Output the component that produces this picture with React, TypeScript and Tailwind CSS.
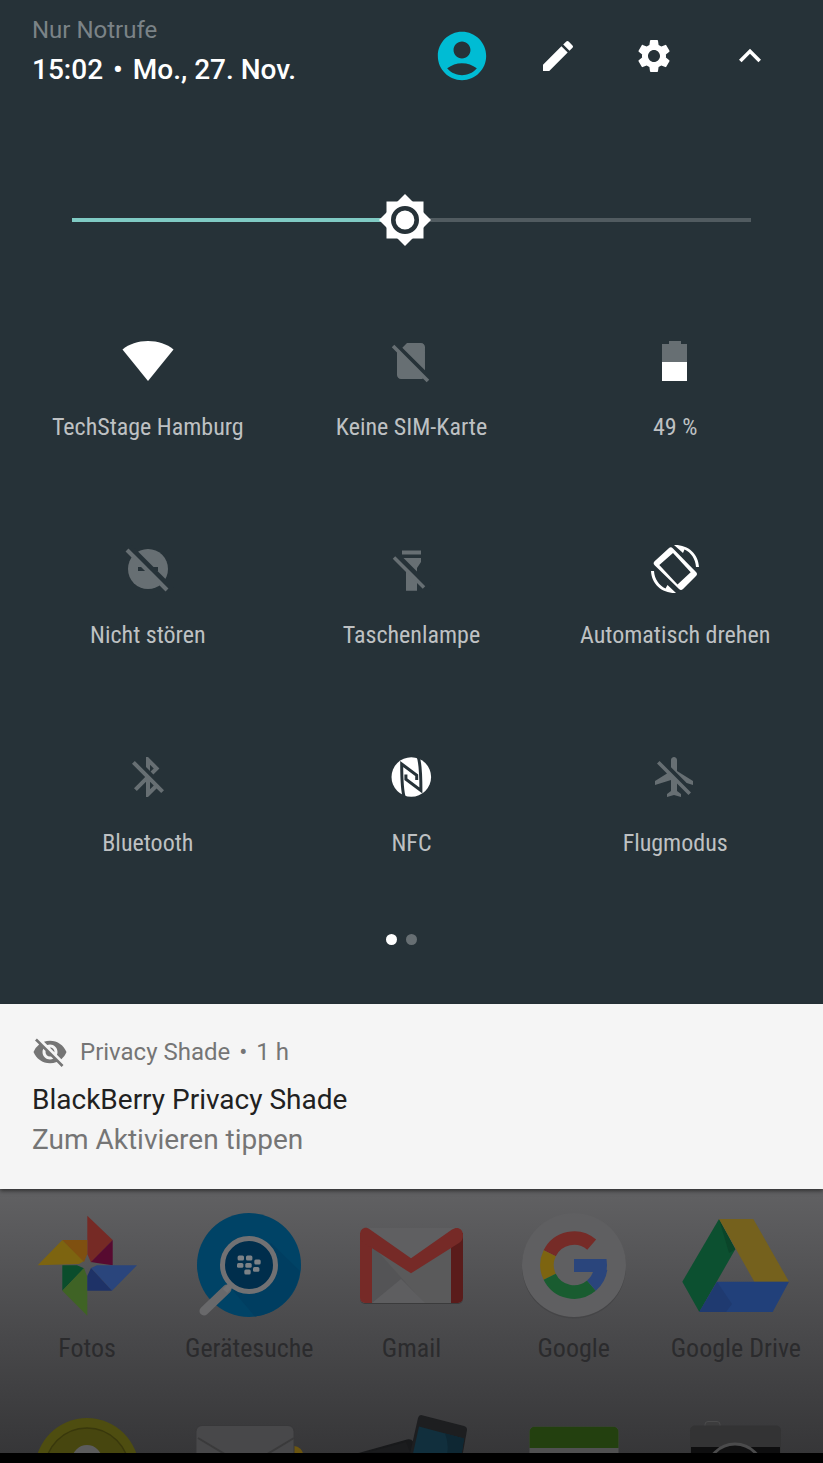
import { useState, type ReactNode } from 'react';
import {
  MdAccountCircle,
  MdEdit,
  MdExpandLess,
  MdSettings,
  MdVisibilityOff,
} from 'react-icons/md';

const condensed = "font-['Roboto_Condensed',Roboto,sans-serif]";

function WifiIcon() {
  return (
    <svg viewBox="0 0 56 56" className="size-14 fill-white">
      <path d="M28 48 2.500 16.500C9 11 18 8 28 8s19 3 25.500 8.500z" />
    </svg>
  );
}

// 24px material glyphs, padded so that they share the 56px tile box
function GlyphIcon({ d }: { d: string }) {
  return (
    <svg viewBox="-2 -2 28 28" className="size-14 fill-[#676f73]">
      <path d={d} />
    </svg>
  );
}

function BatteryIcon() {
  return (
    <svg viewBox="0 0 56 56" className="size-14">
      <path d="M22 8h12v3h6v18H15V11h7z" fill="#676f73" />
      <path d="M15 29h25v19H15z" fill="#fff" />
    </svg>
  );
}

function DoNotDisturbIcon() {
  return (
    <svg viewBox="0 0 56 56" className="size-14">
      <circle cx="28" cy="28" r="20" fill="#676f73" />
      <path d="M18 26h20v4H18z" fill="#263238" />
      <path d="M10 6 52 48" stroke="#263238" strokeWidth="5" />
      <path d="M7 9 47 49" stroke="#676f73" strokeWidth="4" />
    </svg>
  );
}

function FlashlightIcon() {
  return (
    <svg viewBox="0 0 56 56" className="size-14">
      <path d="M19 9.500h19v4H19zM19 17h19v4l-4 6v22.700H23V27l-4-6z" fill="#676f73" />
      <path d="M14 14 46 46" stroke="#263238" strokeWidth="5" />
      <path d="M10 20 23 33v-6l-4-5-6-6z" fill="#263238" />
      <path d="M11 16.500 41 46.500" stroke="#676f73" strokeWidth="3.500" />
    </svg>
  );
}

function RotateIcon() {
  return (
    <svg viewBox="0 0 56 56" className="size-14 fill-white">
      <path
        fillRule="evenodd"
        d="M21.800 7.300 7.600 20.300q-2 2 0 4L32 48q2 2 4 0l13-13q2-2 0-4L26 7.400q-2.200-2.200-4.200-.1zM26 12l17.700 19.300L30.500 43.500 12.300 24z"
      />
      <path d="M27 4C41 3.500 51.500 13 52 26h-3C48.500 18 44 11.500 37.500 8.600L36 12z" />
      <path d="M29 52C15 52.500 4.500 43 4 30h3c.5 8 5 14.500 11.500 17.400L20.500 44z" />
    </svg>
  );
}

function NfcIcon() {
  return (
    <svg viewBox="0 0 56 56" className="size-14">
      <circle cx="28.300" cy="28" r="19.800" fill="#fff" />
      <g fill="none" stroke="#263238" strokeWidth="3">
        <path d="M21.500 49C19 42 18.700 30 18.700 15L33.700 26.300V31" />
        <path d="M35.100 7.500c2.500 7 2.800 19 2.800 34L22.900 30.200V25.500" />
      </g>
    </svg>
  );
}

const tiles: { label: string; on: boolean; icon: ReactNode }[] = [
  { label: 'TechStage Hamburg', on: true, icon: <WifiIcon /> },
  {
    label: 'Keine SIM-Karte',
    on: false,
    icon: (
      <GlyphIcon d="M18.990 5c0-1.100-.89-2-1.990-2h-7L7.660 5.340 19 16.680 18.990 5zM3.650 3.880L2.380 5.150 5 7.770V19c0 1.100.9 2 2 2h10.010c.35 0 .67-.1.96-.26l1.880 1.880 1.270-1.270L3.650 3.880z" />
    ),
  },
  { label: '49 %', on: true, icon: <BatteryIcon /> },
  { label: 'Nicht stören', on: false, icon: <DoNotDisturbIcon /> },
  { label: 'Taschenlampe', on: false, icon: <FlashlightIcon /> },
  { label: 'Automatisch drehen', on: true, icon: <RotateIcon /> },
  {
    label: 'Bluetooth',
    on: false,
    icon: (
      <GlyphIcon d="M13 5.830l1.880 1.880-1.600 1.600 1.410 1.410 3.020-3.020L12 2h-1v5.030l2 2v-3.200zM5.410 4L4 5.410 10.590 12 5 17.590 6.410 19 11 14.410V22h1l4.290-4.290 2.300 2.290L20 18.590 5.410 4zM13 18.170v-3.760l1.880 1.880L13 18.170z" />
    ),
  },
  { label: 'NFC', on: true, icon: <NfcIcon /> },
  {
    label: 'Flugmodus',
    on: false,
    icon: (
      <GlyphIcon d="M13 9V3.500c0-.83-.67-1.500-1.500-1.500S10 2.670 10 3.500v3.680l7.830 7.830L21 16v-2l-8-5zM3 5.270l4.990 4.990L2 14v2l8-2.500V19l-2 1.500V22l3.500-1 3.500 1v-1.500L13 19v-3.730L18.730 21 20 19.730 4.270 4 3 5.270z" />
    ),
  },
];

function PhotosLogo() {
  return (
    <svg viewBox="0 0 112 112" className="size-28">
      <path d="M56.300 6.700 81.700 31 60 53.500 56.300 45z" fill="#762a25" />
      <path d="M81.700 31v25.300L66 54l-6-1z" fill="#570a30" />
      <path d="M6.700 56.300 31.300 31 53 52l-5 3z" fill="#7d6410" />
      <path d="M31.300 31h25v14L53 53z" fill="#7f5010" />
      <path d="M31.300 56.300H46l7 3-21.700 22.400z" fill="#0a4d2c" />
      <path d="m31.300 81.700 25 25V68L53 59z" fill="#3f6325" />
      <path d="M106 56.300 81 81.700 60 59l6-2.700z" fill="#2a457c" />
      <path d="M56.300 81.700H81L60 59l-3.700 8z" fill="#1e3267" />
    </svg>
  );
}

function DeviceSearchLogo() {
  const keys = [
    [47.8, 49], [56.2, 49], [47.2, 56.3], [55.5, 56.3], [64.5, 53], [63.2, 60.3], [54.5, 63],
  ];
  return (
    <svg viewBox="0 0 112 112" className="size-28">
      <circle cx="56" cy="56" r="52" fill="#004366" />
      <path d="M78 34 107 62A52 52 0 0 1 62 107.500L37 78z" fill="#003e61" />
      <path d="M34 80 11 102" stroke="#69696b" strokeWidth="9" strokeLinecap="round" />
      <path d="M38 76 32 82" stroke="#717173" strokeWidth="6" />
      <circle cx="56" cy="56" r="26.500" fill="#002e4c" stroke="#717173" strokeWidth="5" />
      {keys.map(([x, y]) => (
        <rect key={`${x}-${y}`} x={x - 3.2} y={y - 2.4} width="6.400" height="4.800" rx="1.500" fill="#7c8287" />
      ))}
    </svg>
  );
}

function GmailLogo() {
  return (
    <svg viewBox="0 0 112 112" className="size-28">
      <rect x="5" y="20" width="103" height="75" rx="5" fill="#3b3b3c" />
      <rect x="5" y="19" width="103" height="75" rx="5" fill="#5f5f61" />
      <path d="M17 36 56 64 96 36v58H17z" fill="#5a5a5b" />
      <path d="M17 36 69 94H17z" fill="#545456" />
      <path d="M17 94 46 70l24 24z" fill="#5e5e60" />
      <path d="M5 24h12v70h-7a5 5 0 0 1-5-5z" fill="#762a27" />
      <path d="M96 24h12v65a5 5 0 0 1-5 5h-7z" fill="#5a1c1b" />
      <path d="M5 26c0-7 6-9 10-5.500L56 49.300l41-28.800c5-3.500 11-1 11 5.500 0 4-1 6-4 8L56 64.300 9 34c-3-2-4-4-4-8z" fill="#762a27" />
    </svg>
  );
}

function GoogleLogo() {
  return (
    <svg viewBox="0 0 112 112" className="size-28">
      <circle cx="56" cy="57.500" r="52" fill="#454547" />
      <circle cx="56" cy="56" r="52" fill="#5f5f61" />
      <g fill="none" strokeWidth="13.500">
        <path d="M73.700 35.600A27 27 0 0 0 31.700 44.300" stroke="#762b27" />
        <path d="M31.700 44.300A27 27 0 0 0 31.700 67.800" stroke="#7d6410" />
        <path d="M31.700 67.800A27 27 0 0 0 73.400 76.700" stroke="#195c30" />
        <path d="M73.400 76.700A27 27 0 0 0 82.600 60" stroke="#2a457c" />
      </g>
      <path d="M56 50h32.500q1 6 0 13H56z" fill="#2a457c" />
    </svg>
  );
}

function DriveLogo() {
  return (
    <svg viewBox="0 0 112 112" className="size-28">
      <path d="M39 10 55.300 40.300 19.300 103 2.300 72.700z" fill="#0c5030" />
      <path d="M39 10 55.300 40.300 49 44z" fill="#0a4529" />
      <path d="M39 10h34.300L109 72.700H74.300z" fill="#75611d" />
      <path d="M37 72.700h72L92.700 103H19.300z" fill="#21407a" />
      <path d="M37 72.700 52 95l-6 8H19.300z" fill="#1f3a70" />
    </svg>
  );
}

function CoinLogo() {
  return (
    <svg viewBox="0 0 112 112" className="size-28">
      <circle cx="56" cy="56" r="52" fill="#4e4d10" />
      <circle cx="56" cy="56" r="42" fill="#47460f" stroke="#39380c" strokeWidth="1.500" />
      <circle cx="56" cy="46" r="11" fill="none" stroke="#5c5c5d" strokeWidth="8" />
    </svg>
  );
}

function MailLogo() {
  return (
    <svg viewBox="0 0 112 112" className="size-28">
      <circle cx="101" cy="41" r="9" fill="#6b5510" />
      <rect x="3" y="11.500" width="98" height="80" rx="6" fill="#48484a" stroke="#38383a" />
      <path d="m5 24 30 18h36l30-18" fill="none" stroke="#3a3a3b" strokeWidth="2" />
    </svg>
  );
}

function DevicesLogo() {
  return (
    <svg viewBox="0 0 112 112" className="size-28">
      <path d="M0 40 52 25.500q4-1 6 2L62 40z" fill="#18191b" />
      <path d="M14 38 51 28l4 10z" fill="#1b1c1e" />
      <path d="M67 1.200 109 12q3.500 1 3 4L107 44H54l9-40q1-3.500 4-2.800z" fill="#1d1e20" />
      <path d="m64 12.500 45 12L106 44H57z" fill="#112f3d" />
      <path d="M90 19.500 109 24.500 106 44H91q4-12-1-24.500z" fill="#0e2733" />
    </svg>
  );
}

function CalendarLogo() {
  return (
    <svg viewBox="0 0 112 112" className="size-28">
      <rect x="11.500" y="12.700" width="89" height="86" rx="5" fill="#505051" />
      <path d="M16.500 12.700h79a5 5 0 0 1 5 5V34h-89V17.700a5 5 0 0 1 5-5z" fill="#23400f" />
    </svg>
  );
}

function CameraLogo() {
  return (
    <svg viewBox="0 0 112 112" className="size-28">
      <rect x="25" y="7.500" width="15" height="8" rx="3" fill="#3c3c3d" stroke="#4b4b4c" />
      <rect x="10" y="11.500" width="91" height="80" rx="5" fill="#333334" />
      <path d="M11 33h89v40H11z" fill="#0e0e0f" />
      <circle cx="55" cy="58" r="28" fill="#111112" stroke="#4b4b4c" strokeWidth="3" />
    </svg>
  );
}

const apps: { name: string; logo: ReactNode }[] = [
  { name: 'Fotos', logo: <PhotosLogo /> },
  { name: 'Gerätesuche', logo: <DeviceSearchLogo /> },
  { name: 'Gmail', logo: <GmailLogo /> },
  { name: 'Google', logo: <GoogleLogo /> },
  { name: 'Google Drive', logo: <DriveLogo /> },
];

const nextApps = [
  <CoinLogo key="coin" />,
  <MailLogo key="mail" />,
  <DevicesLogo key="devices" />,
  <CalendarLogo key="calendar" />,
  <CameraLogo key="camera" />,
];

function BrightnessSlider() {
  const [value, setValue] = useState(49);

  return (
    <div className="relative mx-[72px] mt-[82px] flex h-[52px] items-center">
      <div className="h-1 w-full bg-[#515b60]">
        <div className="h-full bg-[#80cbc4]" style={{ width: `${value}%` }} />
      </div>
      <svg
        viewBox="0 0 52 52"
        className="absolute top-0 size-[52px] -translate-x-1/2"
        style={{ left: `${value}%` }}
      >
        <path d="M7.500 7.500h37v37h-37z" fill="#fff" />
        <path d="M26 0 52 26 26 52 0 26z" fill="#fff" />
        <circle cx="26" cy="26" r="11.700" fill="none" stroke="#263238" strokeWidth="4.600" />
      </svg>
      <input
        type="range"
        aria-label="Helligkeit"
        value={value}
        onChange={(e) => setValue(Number(e.target.value))}
        className="absolute inset-0 w-full cursor-pointer opacity-0"
      />
    </div>
  );
}

export default function App() {
  return (
    <main className="flex h-screen flex-col overflow-hidden bg-[#616163] font-[Roboto,sans-serif]">
      <section className="shrink-0 bg-[#263238] pb-[59px]">
        <header className="flex h-28 justify-between pr-[25px] pl-8">
          <div className="pt-2.5 whitespace-nowrap">
            <p className="text-2xl leading-10 text-[#7b8387]">Nur Notrufe</p>
            <p className="text-[28px] leading-10 font-medium text-white">
              15:02 <span className="mx-[3px]">•</span> Mo., 27. Nov.
            </p>
          </div>
          <div className="flex text-white">
            <button aria-label="Nutzer" className="flex w-24 items-center justify-center">
              <MdAccountCircle className="size-[58px] text-[#00bcd4]" />
            </button>
            <button aria-label="Bearbeiten" className="flex w-24 items-center justify-center">
              <MdEdit className="size-10" />
            </button>
            <button aria-label="Einstellungen" className="flex w-24 items-center justify-center">
              <MdSettings className="size-10" />
            </button>
            <button aria-label="Einklappen" className="flex w-24 items-center justify-center">
              <MdExpandLess className="size-11" />
            </button>
          </div>
        </header>

        <BrightnessSlider />

        <div className="mt-[87px] grid grid-cols-3 gap-y-[100px] px-4">
          {tiles.map((tile) => (
            <button key={tile.label} aria-pressed={tile.on} className="flex flex-col items-center gap-6">
              {tile.icon}
              <span className={`${condensed} text-2xl leading-7 whitespace-nowrap text-[#bec1c3]`}>
                {tile.label}
              </span>
            </button>
          ))}
        </div>

        <div className="mt-[77px] flex justify-center gap-[9px] pr-5">
          <span className="size-[11px] rounded-full bg-white" />
          <span className="size-[11px] rounded-full bg-[#676f73]" />
        </div>
      </section>

      <article className="z-10 shrink-0 bg-[#f5f5f5] px-8 pt-7 pb-[29px] shadow-[0_2px_4px_rgba(0,0,0,0.5)]">
        <div className="flex h-10 items-center gap-3 text-2xl text-[#757575]">
          <MdVisibilityOff className="size-9" />
          <p>
            Privacy Shade <span className="mx-[3px]">•</span> 1 h
          </p>
        </div>
        <h2 className="mt-2 text-[28px] leading-10 text-[#212121]">BlackBerry Privacy Shade</h2>
        <p className="text-[28px] leading-10 text-[#757575]">Zum Aktivieren tippen</p>
      </article>

      <section className="min-h-0 flex-1 overflow-hidden bg-linear-to-b from-[#616163] to-[#363638] px-1.5 pt-5">
        <div className="grid grid-cols-5 gap-y-[46px]">
          {apps.map((app) => (
            <button key={app.name} className="flex flex-col items-center gap-[7px]">
              {app.logo}
              <span className={`${condensed} text-[26px] leading-10 whitespace-nowrap text-[#2b2b2d]`}>
                {app.name}
              </span>
            </button>
          ))}
          {nextApps.map((logo) => (
            <div key={logo.key} className="flex justify-center">
              {logo}
            </div>
          ))}
        </div>
      </section>

      <div className="h-2.5 shrink-0 bg-black" />
    </main>
  );
}
